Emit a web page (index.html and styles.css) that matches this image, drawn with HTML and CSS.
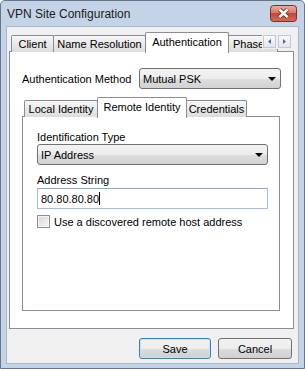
FILE: index.html
```html
<!DOCTYPE html>
<html lang="en">

<head>
    <meta charset="UTF-8">
    <title>VPN Site Configuration</title>
    <link rel="stylesheet" href="styles.css">
</head>

<body>
    <div class="window">
        <div class="titlebar">
            <span class="title">VPN Site Configuration</span>
            <div class="close">
                <svg width="27" height="17" viewBox="0 0 27 17">
                    <defs>
                        <linearGradient id="closeGrad" x1="0" y1="0" x2="0" y2="1">
                            <stop offset="0" stop-color="#eab0a4" />
                            <stop offset="0.45" stop-color="#d87a68" />
                            <stop offset="0.5" stop-color="#c4483a" />
                            <stop offset="1" stop-color="#d66a55" />
                        </linearGradient>
                    </defs>
                    <rect x="0.5" y="0.5" width="26" height="16" rx="3" fill="url(#closeGrad)" stroke="#7a3128" />
                    <path d="M9.5 4.5 L17.5 12 M17.5 4.5 L9.5 12" stroke="#6b2a22" stroke-width="4.2" />
                    <path d="M9.5 4.5 L17.5 12 M17.5 4.5 L9.5 12" stroke="#ffffff" stroke-width="2.4" />
                </svg>
            </div>
        </div>

        <div class="client">
            <div class="tabs main_tabs">
                <div class="tab tab_client">Client</div>
                <div class="tab tab_names">Name Resolution</div>
                <div class="tab tab_auth active">Authentication</div>
                <div class="tab tab_phase">Phase 1</div>
                <div class="tab_scroll">
                    <div class="scroll_btn">
                        <svg width="3" height="5" viewBox="0 0 3 5"><path d="M3 0 L0 2.5 L3 5 Z" fill="#3f6fa8" /></svg>
                    </div>
                    <div class="scroll_btn">
                        <svg width="3" height="5" viewBox="0 0 3 5"><path d="M0 0 L3 2.5 L0 5 Z" fill="#3f6fa8" /></svg>
                    </div>
                </div>
            </div>

            <div class="panel main_panel">
                <div class="method_row">
                    <span>Authentication Method</span>
                    <div class="combo method_combo">
                        <span>Mutual PSK</span>
                        <span class="combo_arrow"></span>
                    </div>
                </div>

                <div class="tabs sub_tabs">
                    <div class="tab tab_local">Local Identity</div>
                    <div class="tab tab_remote active">Remote Identity</div>
                    <div class="tab tab_creds">Credentials</div>
                </div>

                <div class="panel sub_panel">
                    <div class="field_label">Identification Type</div>
                    <div class="combo">
                        <span>IP Address</span>
                        <span class="combo_arrow"></span>
                    </div>

                    <div class="field_label address_label">Address String</div>
                    <div class="textbox">80.80.80.80<span class="caret"></span></div>

                    <div class="check_row">
                        <span class="checkbox"></span>
                        <span>Use a discovered remote host address</span>
                    </div>
                </div>
            </div>

            <div class="buttons">
                <div class="btn btn_default">Save</div>
                <div class="btn btn_cancel">Cancel</div>
            </div>
        </div>
    </div>
</body>

</html>
```

FILE: styles.css
```css
* {
    margin: 0;
    padding: 0;
    box-sizing: border-box;
}

body {
    width: 305px;
    height: 369px;
    overflow: hidden;
    background: #ffffff;
    font-family: "Liberation Sans", Arial, sans-serif;
    font-size: 11px;
    color: #000000;
}

.window {
    width: 305px;
    height: 369px;
    background-color: #c4d4e6;
    border: 1px solid #66768a;
    border-radius: 5px 5px 0 0;
    display: flex;
    flex-direction: column;
}

.titlebar {
    height: 25px;
    display: flex;
    align-items: center;
    justify-content: space-between;
    padding: 0 7px 0 6px;
}

.title {
    font-size: 12px;
    color: #1b1b1b;
    padding-top: 1px;
}

.close {
    width: 27px;
    height: 17px;
    display: flex;
}

.client {
    flex: 1;
    margin: 0 5px 4px 5px;
    background-color: #f0f0f0;
    border: 1px solid #a9b8ca;
    padding: 5px 4px 0 2px;
    display: flex;
    flex-direction: column;
}

/* tabs */

.tabs {
    position: relative;
    display: flex;
    align-items: flex-end;
    height: 20px;
    padding-left: 2px;
    margin-bottom: -1px;
}

.tab {
    height: 17px;
    border: 1px solid #898c95;
    border-bottom: none;
    border-radius: 2px 2px 0 0;
    background: linear-gradient(#f7f7f7, #e9e9e9 50%, #dcdcdc);
    display: flex;
    align-items: center;
    justify-content: center;
    white-space: nowrap;
    padding-bottom: 1px;
}

.tab + .tab {
    margin-left: -1px;
}

.tab.active {
    position: relative;
    z-index: 1;
    height: 21px;
    margin-bottom: -1px;
    background: #ffffff;
    padding-bottom: 2px;
}

.tab_client { width: 43px; }
.tab_names { width: 93px; }
.tab_auth { width: 84px; }
.tab_phase {
    width: 50px;
    justify-content: flex-start;
    padding-left: 4px;
    overflow: hidden;
}

.tab_local { width: 74px; }
.tab_remote { width: 90px; }
.tab_creds { width: 61px; }

.tab_scroll {
    position: absolute;
    left: 253px;
    top: 2px;
    width: 32px;
    height: 15px;
    background-color: #f0f0f0;
    display: flex;
    gap: 2px;
    padding: 1px 0 0 1px;
}

.scroll_btn {
    width: 13px;
    height: 13px;
    border: 1px solid #c3c9d2;
    background: linear-gradient(#f9f9f9, #e4e6ea);
    display: flex;
    align-items: center;
    justify-content: center;
}

/* panels */

.panel {
    background-color: #ffffff;
    border: 1px solid #898c95;
}

.main_panel {
    height: 278px;
    padding: 16px 12px 0 12px;
}

.method_row {
    display: flex;
    align-items: center;
    height: 21px;
}

.method_combo {
    width: 142px;
    margin-left: auto;
}

.combo {
    height: 21px;
    border: 1px solid #707070;
    border-radius: 3px;
    background: linear-gradient(#f3f3f3, #ececec 50%, #dedede 51%, #d2d2d2);
    display: flex;
    align-items: center;
    justify-content: space-between;
    padding: 0 4px 0 3px;
}

.combo_arrow {
    width: 0;
    height: 0;
    border-left: 4px solid transparent;
    border-right: 4px solid transparent;
    border-top: 4px solid #000000;
    margin-top: 1px;
}

.sub_tabs {
    margin-top: 8px;
}

.sub_panel {
    height: 195px;
    margin-right: 1px;
    padding: 14px 11px 0 14px;
}

.field_label {
    height: 13px;
    line-height: 13px;
}

.address_label {
    margin-top: 9px;
    margin-bottom: 1px;
}

.textbox {
    height: 21px;
    border: 1px solid #a3bcd8;
    border-top-color: #8eaacb;
    background-color: #ffffff;
    display: flex;
    align-items: center;
    padding-left: 3px;
}

.caret {
    width: 1px;
    height: 13px;
    background-color: #000000;
}

.check_row {
    margin-top: 6px;
    display: flex;
    align-items: center;
    gap: 4px;
    height: 13px;
}

.checkbox {
    width: 13px;
    height: 13px;
    border: 1px solid #8e8f8f;
    box-shadow: inset 0 0 0 1px #f4f4f4;
    background: linear-gradient(135deg, #d6d6d6, #f6f6f6);
}

/* buttons */

.buttons {
    margin-top: 9px;
    display: flex;
    justify-content: flex-end;
    gap: 7px;
    padding-right: 2px;
}

.btn {
    height: 21px;
    border: 1px solid #707070;
    border-radius: 3px;
    background: linear-gradient(#f3f3f3, #ececec 50%, #dddddd 51%, #cfcfcf);
    display: flex;
    align-items: center;
    justify-content: center;
}

.btn_default {
    width: 72px;
    border-color: #3c7fb1;
    box-shadow: inset 0 0 0 1px #bfe4f9;
}

.btn_cancel {
    width: 74px;
}
```
